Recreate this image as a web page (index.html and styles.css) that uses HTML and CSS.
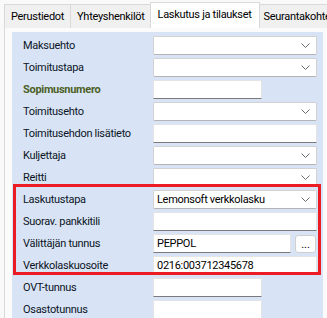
FILE: index.html
```html
<!DOCTYPE html>
<html lang="fi">
<head>
  <meta charset="UTF-8" />
  <title>Laskutus ja tilaukset</title>
  <link rel="stylesheet" href="styles.css">
</head>
<body>
  <div class="tabs">
    <div class="tab">Perustiedot</div>
    <div class="tab">Yhteyshenkilöt</div>
    <div class="tab active">Laskutus ja tilaukset</div>
    <div class="tab">Seurantakohteet</div>
  </div>

  <div class="panel">
    <div class="form">
      <div class="row"><label>Maksuehto</label><div class="combo wide"><span></span><svg class="chev" width="9" height="5" viewBox="0 0 9 5"><polyline points="0.5,0.5 4.5,4.5 8.5,0.5" /></svg></div></div>
      <div class="row"><label>Toimitustapa</label><div class="combo wide"><span></span><svg class="chev" width="9" height="5" viewBox="0 0 9 5"><polyline points="0.5,0.5 4.5,4.5 8.5,0.5" /></svg></div></div>
      <div class="row"><label class="required">Sopimusnumero</label><div class="field short"></div></div>
      <div class="row"><label>Toimitusehto</label><div class="combo wide"><span></span><svg class="chev" width="9" height="5" viewBox="0 0 9 5"><polyline points="0.5,0.5 4.5,4.5 8.5,0.5" /></svg></div></div>
      <div class="row"><label>Toimitusehdon lisätieto</label><div class="field wide"></div></div>
      <div class="row"><label>Kuljettaja</label><div class="combo wide"><span></span><svg class="chev" width="9" height="5" viewBox="0 0 9 5"><polyline points="0.5,0.5 4.5,4.5 8.5,0.5" /></svg></div></div>
      <div class="row"><label>Reitti</label><div class="combo wide"><span></span><svg class="chev" width="9" height="5" viewBox="0 0 9 5"><polyline points="0.5,0.5 4.5,4.5 8.5,0.5" /></svg></div></div>
      <div class="row"><label>Laskutustapa</label><div class="combo wide"><span>Lemonsoft verkkolasku</span><svg class="chev" width="9" height="5" viewBox="0 0 9 5"><polyline points="0.5,0.5 4.5,4.5 8.5,0.5" /></svg></div></div>
      <div class="row"><label>Suorav. pankkitili</label><div class="field wide"></div></div>
      <div class="row"><label>Välittäjän tunnus</label><div class="field mid">PEPPOL</div><div class="dots">...</div></div>
      <div class="row"><label>Verkkolaskuosoite</label><div class="field wide">0216:003712345678</div></div>
      <div class="row"><label>OVT-tunnus</label><div class="field short"></div></div>
      <div class="row"><label>Osastotunnus</label><div class="field short"></div></div>

      <div class="highlight"></div>
    </div>
  </div>
</body>
</html>
```

FILE: styles.css
```css
* { box-sizing: border-box; }
body {
  margin: 0;
  background: #f9f9f9;
  font-family: Roboto, 'Liberation Sans', sans-serif;
  font-size: 11px;
  letter-spacing: -0.3px;
  color: #000;
  width: 327px;
  height: 318px;
  overflow: hidden;
}
.tabs {
  display: flex;
  align-items: flex-end;
  height: 28px;
  padding-left: 4px;
  white-space: nowrap;
}
.tab {
  height: 24px;
  line-height: 23px;
  padding: 0 6px;
  background: #f0f0f0;
  border: 1px solid #d9d9d9;
  border-bottom: none;
  margin-right: -1px;
  color: #000;
}
.tab.active {
  height: 26px;
  line-height: 24px;
  background: #fff;
  padding: 0 7px;
  margin: 0 -2px 0 -1px;
  position: relative;
  z-index: 1;
}
.tab.active + .tab {
  padding-left: 5px;
}
.panel {
  border: 1px solid #d9d9d9;
  border-right: none;
  margin-left: 4px;
  margin-top: -1px;
  background: #fbfbfb;
  padding: 4px 0 0 7px;
  height: 300px;
}
.form {
  position: relative;
  width: 311px;
  height: 290px;
  background: #d8e4f6;
  padding: 4px 0 0 11px;
}
.row {
  display: flex;
  align-items: center;
  height: 22px;
  padding-bottom: 3px;
}
.row label {
  width: 130px;
  flex: none;
  color: #0c1424;
}
.row label.required {
  font-weight: bold;
  color: #4d5f27;
}
.combo, .field {
  height: 19px;
  background: #fff;
  display: flex;
  align-items: center;
  padding: 0 3px;
  color: #000;
}
.combo {
  justify-content: space-between;
  border: 1px solid #d2d2d2;
  border-bottom-color: #b4b4b4;
  border-radius: 2px;
  padding-right: 6px;
}
.field {
  border: 1px solid #e4e4e4;
  border-bottom-color: #7a7a7a;
}
.wide { width: 164px; }
.mid { width: 138px; }
.short { width: 109px; }
.chev {
  fill: none;
  stroke: #6a6a6a;
  stroke-width: 1;
}
.dots {
  width: 21px;
  height: 18px;
  margin-left: 4px;
  background: #fdfdfd;
  border: 1px solid #d0d0d0;
  border-radius: 3px;
  text-align: center;
  line-height: 18px;
  letter-spacing: 0;
}
.highlight {
  position: absolute;
  left: 1px;
  top: 152px;
  width: 308px;
  height: 91px;
  border: 3px solid #ec1c24;
  pointer-events: none;
}
```
